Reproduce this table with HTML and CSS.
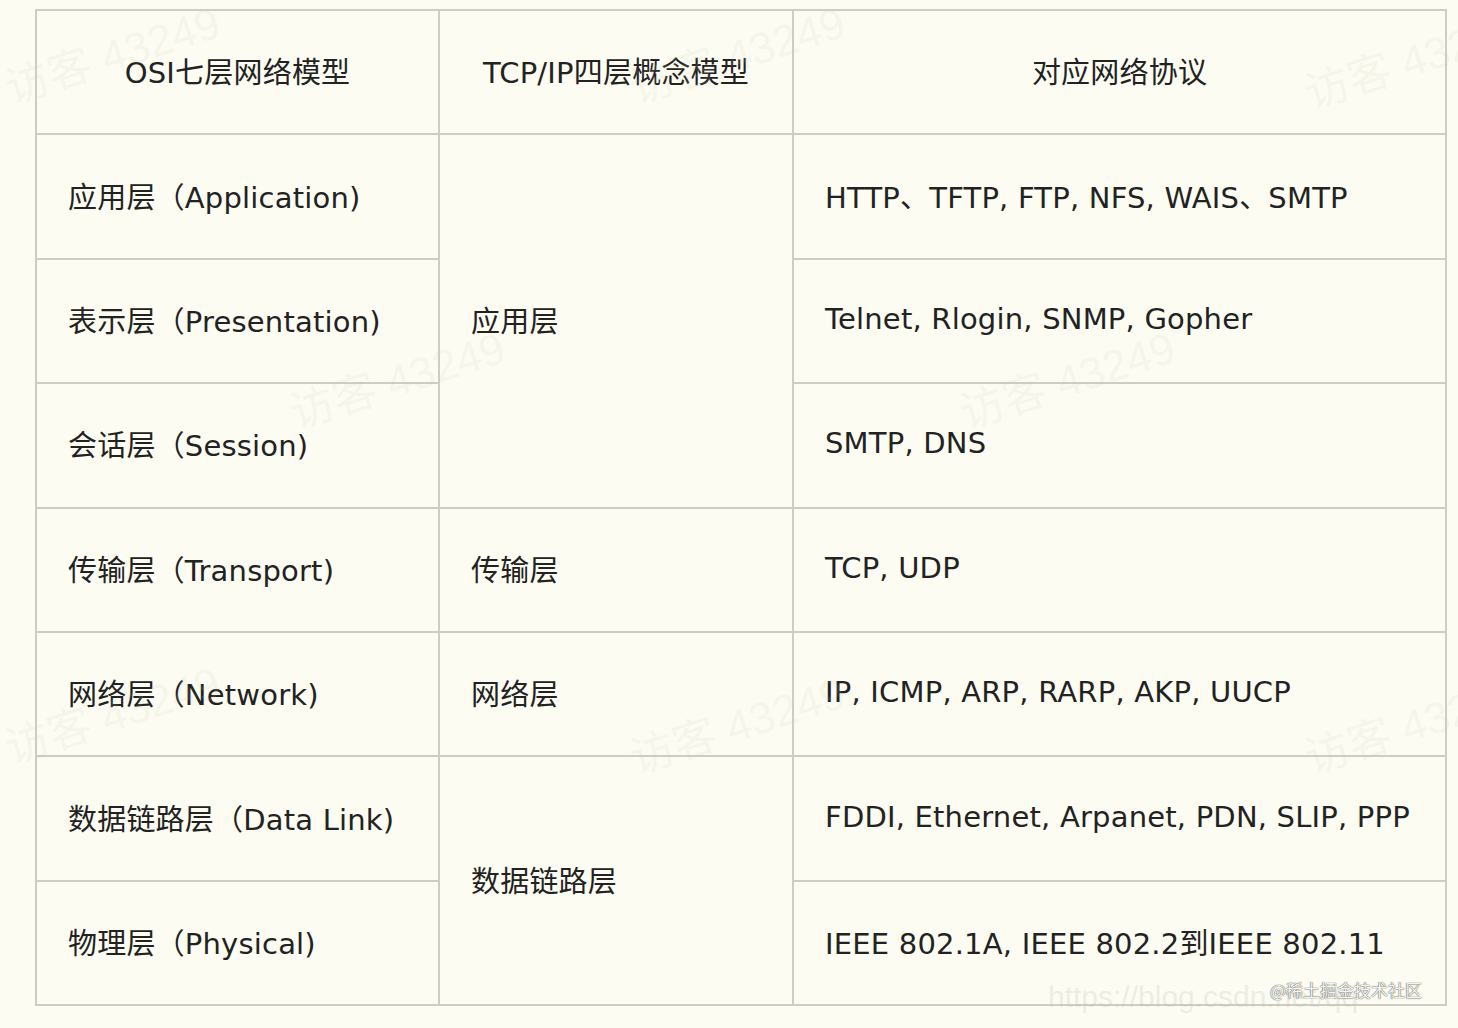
FILE: index.html
```html
<!DOCTYPE html>
<html lang="zh">
<head>
<meta charset="utf-8">
<title>OSI</title>
<link rel="stylesheet" href="styles.css">
</head>
<body>
<div class="page">
  <table class="osi">
    <colgroup>
      <col class="c1"><col class="c2"><col class="c3">
    </colgroup>
    <tr class="head">
      <td class="center">OSI七层网络模型</td>
      <td class="center">TCP/IP四层概念模型</td>
      <td class="center">对应网络协议</td>
    </tr>
    <tr>
      <td>应用层（Application)</td>
      <td rowspan="3">应用层</td>
      <td>HTTP、TFTP, FTP, NFS, WAIS、SMTP</td>
    </tr>
    <tr>
      <td>表示层（Presentation)</td>
      <td>Telnet, Rlogin, SNMP, Gopher</td>
    </tr>
    <tr>
      <td>会话层（Session)</td>
      <td>SMTP, DNS</td>
    </tr>
    <tr>
      <td>传输层（Transport)</td>
      <td>传输层</td>
      <td>TCP, UDP</td>
    </tr>
    <tr>
      <td>网络层（Network)</td>
      <td>网络层</td>
      <td>IP, ICMP, ARP, RARP, AKP, UUCP</td>
    </tr>
    <tr>
      <td>数据链路层（Data Link)</td>
      <td rowspan="2">数据链路层</td>
      <td>FDDI, Ethernet, Arpanet, PDN, SLIP, PPP</td>
    </tr>
    <tr>
      <td>物理层（Physical)</td>
      <td>IEEE 802.1A, IEEE 802.2到IEEE 802.11</td>
    </tr>
  </table>

  <div class="wm w1">访客 43249</div>
  <div class="wm w2">访客 43249</div>
  <div class="wm w3">访客 43249</div>
  <div class="wm w4">访客 43249</div>
  <div class="wm w5">访客 43249</div>
  <div class="wm w6">访客 43249</div>
  <div class="wm w7">访客 43249</div>
  <div class="wm w8">访客 43249</div>
  <div class="url">https://blog.csdn.net/qq</div>
  <div class="brand">@稀土掘金技术社区</div>
</div>
</body>
</html>
```

FILE: styles.css
```css
html, body {
  margin: 0;
  padding: 0;
  background: #fcfcf2;
}

.page {
  position: relative;
  width: 1458px;
  height: 1028px;
  overflow: hidden;
  padding: 9px 0 0 35px;
  box-sizing: border-box;
  font-family: "DejaVu Sans", "Noto Sans CJK SC", sans-serif;
  color: #222;
}

.osi {
  border-collapse: collapse;
  table-layout: fixed;
  width: 1410px;
  font-size: 29px;
  letter-spacing: 0.2px;
}

.c1 { width: 403px; }
.c2 { width: 354px; }
.c3 { width: 653px; }

.osi td {
  border: 2px solid #cdcdc5;
  height: 124.4px;
  box-sizing: border-box;
  padding: 0 0 4px 31px;
  vertical-align: middle;
  white-space: nowrap;
  font-family: "DejaVu Sans", "Noto Sans CJK SC", sans-serif;
}

.osi td.center {
  text-align: center;
  padding: 0 0 4px 0;
}

.wm {
  position: absolute;
  font-family: "Liberation Sans", "Noto Sans CJK SC", sans-serif;
  font-size: 44px;
  color: rgba(200, 200, 185, 0.13);
  transform: rotate(-18deg);
  white-space: nowrap;
  pointer-events: none;
}
.w1 { left: 0; top: 20px; }
.w2 { left: 625px; top: 20px; }
.w3 { left: 1300px; top: 25px; }
.w4 { left: 285px; top: 345px; }
.w5 { left: 955px; top: 345px; }
.w6 { left: 0; top: 680px; }
.w7 { left: 625px; top: 690px; }
.w8 { left: 1300px; top: 690px; }

.url {
  position: absolute;
  left: 1048px;
  top: 980px;
  font-family: "Liberation Sans", sans-serif;
  font-size: 30px;
  color: rgba(190, 190, 180, 0.25);
  white-space: nowrap;
}

.brand {
  position: absolute;
  left: 1270px;
  top: 977px;
  font-family: "Noto Sans CJK SC", sans-serif;
  font-size: 17px;
  color: #f4f4f0;
  text-shadow: 0 0 1px #555, 0 0 1px #555;
  white-space: nowrap;
}
```
